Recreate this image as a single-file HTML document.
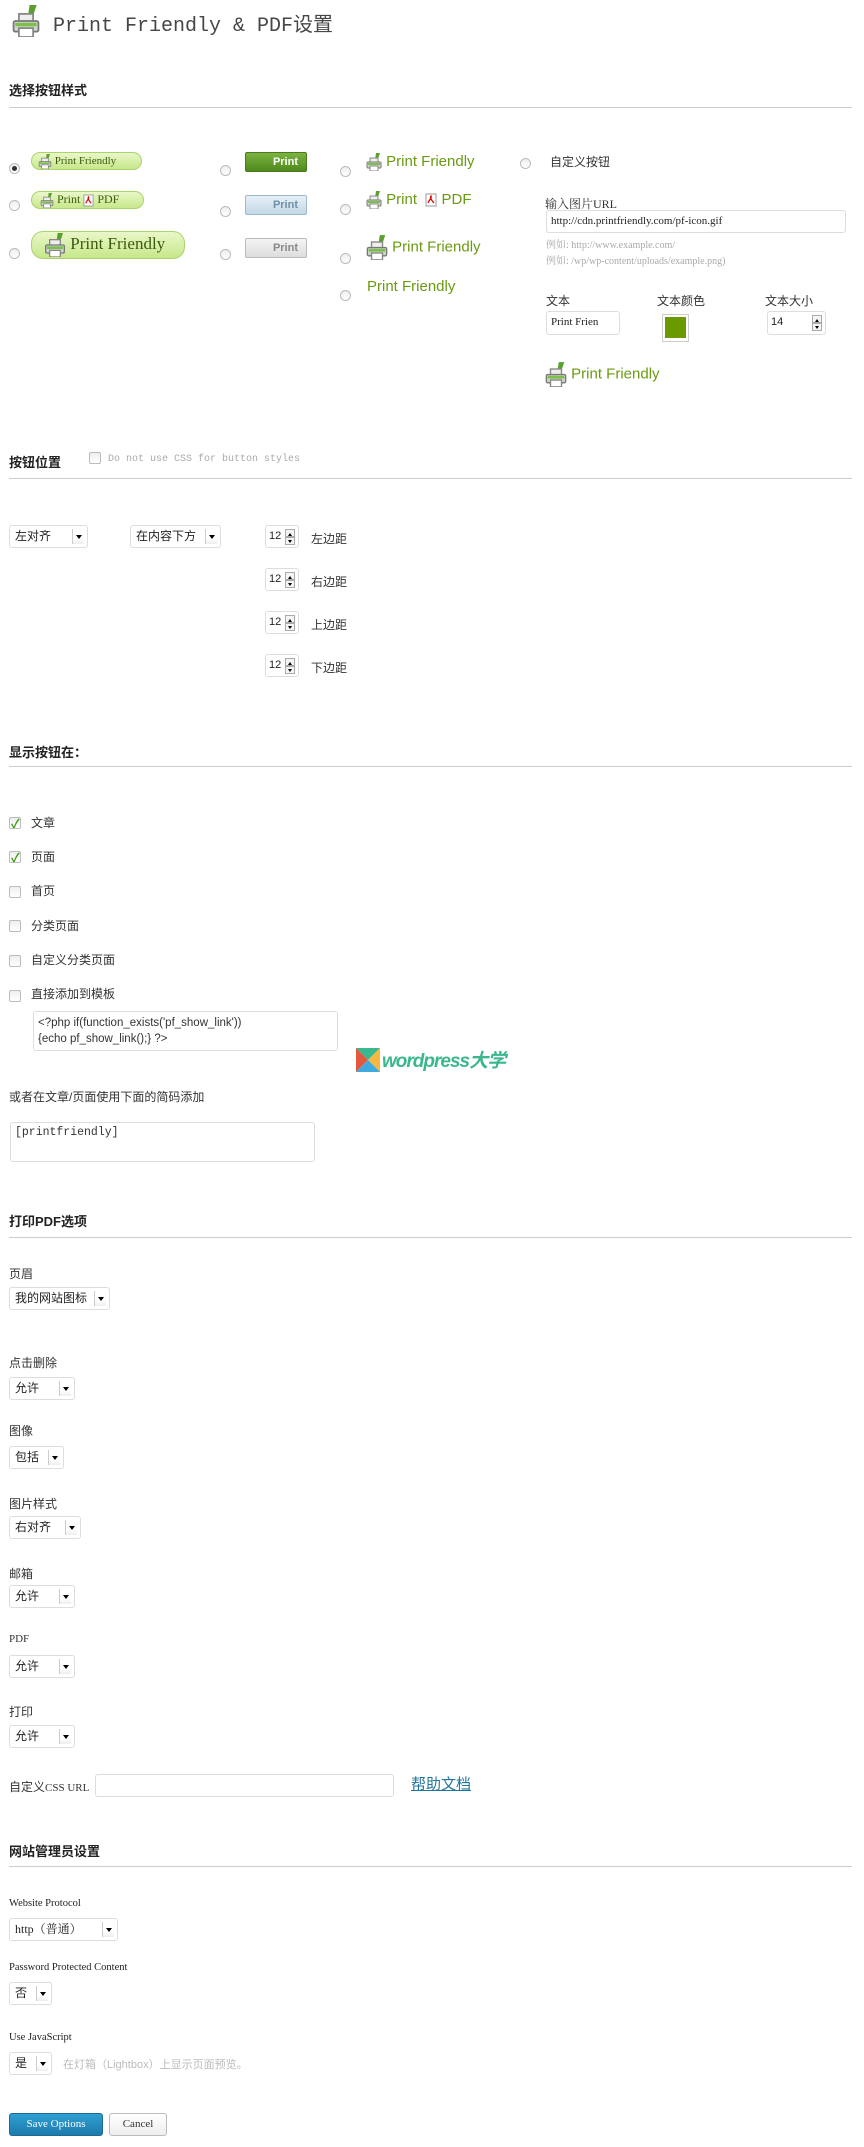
<!DOCTYPE html>
<html><head><meta charset="utf-8">
<style>
*{margin:0;padding:0;box-sizing:border-box}
body{width:864px;height:2147px;position:relative;background:#fff;font-family:"Liberation Sans","Noto Sans CJK SC",sans-serif;font-size:12px;color:#333;overflow:hidden}
.a{position:absolute;white-space:nowrap}
h2{position:absolute;left:9px;font-size:13px;font-weight:bold;color:#222;font-family:"Liberation Sans","Noto Sans CJK SC",sans-serif}
.hr{position:absolute;left:9px;right:12px;height:1px;background:#ccc}
.radio{position:absolute;width:11px;height:11px;border:1px solid #bbb;border-radius:50%;background:linear-gradient(#eee,#fff)}
.radio.on::after{content:"";position:absolute;left:2px;top:2px;width:5px;height:5px;border-radius:50%;background:#333}
.cb{position:absolute;width:12px;height:12px;border:1px solid #bbb;background:linear-gradient(#eee,#fff);border-radius:2px}
.cb.on::after{content:"✓";position:absolute;left:1px;top:-3px;font-size:12px;color:#3a9a10;font-weight:bold}
.inp{position:absolute;border:1px solid #ddd;border-radius:3px;background:#fff;font-family:"Liberation Serif","Noto Serif CJK SC",serif;font-size:11px;padding:4px 4px;color:#222}
.sel{position:absolute;height:23px;border:1px solid #ddd;border-radius:3px;background:#fff;font-size:12px;line-height:21px;padding:0 5px;color:#222}
.sel i{position:absolute;right:3px;top:3px;width:12px;height:15px;border-left:1px solid #ccc;background:linear-gradient(#fff 60%,#eee)}
.sel i::after{content:"";position:absolute;left:3px;top:6px;border:3px solid transparent;border-top:4px solid #000}
.spin{position:absolute;width:34px;height:23px;border:1px solid #ddd;border-radius:3px;font-size:11px;line-height:21px;padding:0 3px;color:#222}
.spin b,.spin u{position:absolute;right:3px;width:10px;height:8px;border:1px solid #aaa;background:#f4f4f4}
.spin b{top:3px}.spin u{top:11px}
.spin b::after{content:"";position:absolute;left:2px;top:1px;border:2px solid transparent;border-bottom:3px solid #000}
.spin u::after{content:"";position:absolute;left:2px;top:2px;border:2px solid transparent;border-top:3px solid #000}
.lbl{position:absolute;font-size:12px;color:#333}
.pf{color:#6a9a10;font-size:15px}
.pill{position:absolute;border:1px solid #a9d36b;border-radius:12px;background:linear-gradient(#eaf7c9,#c6e88a);color:#3b5a10;font-family:"Liberation Serif",serif}
.pb{position:absolute;width:62px;height:20px;border-radius:2px;font-size:11px;font-weight:bold;text-align:right;padding:3px 8px 0 0;color:#fff}
.mono{font-family:"Liberation Mono","Noto Sans CJK SC",monospace}
svg{vertical-align:middle}
</style></head><body>
<svg width="0" height="0" style="position:absolute"><defs>
<symbol id="pr" viewBox="0 0 16 18"><path d="M10 0 L14 0 L12 6 L9 7 Z" fill="#5aa02c"/><rect x="4" y="5" width="8" height="5" fill="#eee" stroke="#888"/><rect x="1" y="9" width="14" height="6" rx="1" fill="#cfd8cf" stroke="#777"/><rect x="2" y="10" width="12" height="2" fill="#7cc04a"/><rect x="4" y="13" width="8" height="5" fill="#fff" stroke="#888"/></symbol>
<symbol id="pdf" viewBox="0 0 12 14"><rect x="1" y="1" width="10" height="12" fill="#fff" stroke="#999"/><path d="M3 10 C5 6 7 4 6 3 C5 4 6 7 9 10" stroke="#d00" fill="none" stroke-width="1.3"/></symbol>
</defs></svg>

<svg class="a" style="left:11px;top:5px" width="30" height="32" viewBox="0 0 16 18"><use href="#pr"/></svg>
<div class="a mono" style="left:53px;top:8px;font-size:20px;color:#464646">Print Friendly &amp; PDF设置</div>

<h2 style="top:80px">选择按钮样式</h2>
<div class="hr" style="top:107px"></div>

<div class="radio on" style="left:9px;top:163px"></div>
<div class="pill" style="left:31px;top:152px;width:111px;height:18px;font-size:11px;padding:1px 0 0 6px"><svg width="14" height="15"><use href="#pr"/></svg> Print Friendly</div>
<div class="radio" style="left:9px;top:200px"></div>
<div class="pill" style="left:31px;top:191px;width:113px;height:18px;font-size:12px;padding:0 0 0 8px"><svg width="14" height="15"><use href="#pr"/></svg> Print <svg width="11" height="13"><use href="#pdf"/></svg> PDF</div>
<div class="radio" style="left:9px;top:248px"></div>
<div class="pill" style="left:31px;top:231px;width:154px;height:28px;font-size:17px;padding:1px 0 0 12px"><svg width="22" height="24"><use href="#pr"/></svg> Print Friendly</div>

<div class="radio" style="left:220px;top:165px"></div>
<div class="pb" style="left:245px;top:152px;background:linear-gradient(#7cb342,#4e8a1c);border:1px solid #4a7a1c">Print</div>
<div class="radio" style="left:220px;top:206px"></div>
<div class="pb" style="left:245px;top:195px;background:linear-gradient(#e6f0f7,#c4d8e6);border:1px solid #9fb8cc;color:#6e8fa8">Print</div>
<div class="radio" style="left:220px;top:249px"></div>
<div class="pb" style="left:245px;top:238px;background:linear-gradient(#f4f4f4,#ddd);border:1px solid #bbb;color:#888">Print</div>

<div class="radio" style="left:340px;top:166px"></div>
<div class="a pf" style="left:366px;top:153px"><svg width="16" height="18"><use href="#pr"/></svg> Print Friendly</div>
<div class="radio" style="left:340px;top:204px"></div>
<div class="a pf" style="left:366px;top:191px"><svg width="16" height="18"><use href="#pr"/></svg> Print &nbsp;<svg width="12" height="14"><use href="#pdf"/></svg> PDF</div>
<div class="radio" style="left:340px;top:253px"></div>
<div class="a pf" style="left:366px;top:235px"><svg width="22" height="25"><use href="#pr"/></svg> Print Friendly</div>
<div class="radio" style="left:340px;top:290px"></div>
<div class="a pf" style="left:367px;top:278px">Print Friendly</div>

<div class="radio" style="left:520px;top:158px"></div>
<div class="lbl" style="left:550px;top:153px">自定义按钮</div>
<div class="lbl" style="left:545px;top:195px;font-family:'Liberation Serif','Noto Serif CJK SC',serif">输入图片URL</div>
<div class="inp" style="left:546px;top:210px;width:300px;height:23px">http://cdn.printfriendly.com/pf-icon.gif</div>
<div class="a" style="left:546px;top:236px;font-size:10px;color:#aaa;font-family:'Liberation Serif','Noto Serif CJK SC',serif">例如: http://www.example.com/</div>
<div class="a" style="left:546px;top:252px;font-size:10px;color:#aaa;font-family:'Liberation Serif','Noto Serif CJK SC',serif">例如:  /wp/wp-content/uploads/example.png)</div>
<div class="lbl" style="left:546px;top:292px">文本</div>
<div class="lbl" style="left:657px;top:292px">文本颜色</div>
<div class="lbl" style="left:765px;top:292px">文本大小</div>
<div class="inp" style="left:546px;top:311px;width:74px;height:24px">Print Frien</div>
<div class="a" style="left:662px;top:314px;width:27px;height:28px;border:1px solid #ccc;background:#fff;padding:2px"><div style="width:21px;height:21px;background:#6a9a00"></div></div>
<div class="spin" style="left:767px;top:311px;width:59px;height:24px">14<b></b><u></u></div>
<div class="a pf" style="left:545px;top:362px"><svg width="22" height="25"><use href="#pr"/></svg> Print Friendly</div>

<h2 style="top:452px">按钮位置</h2>
<div class="cb" style="left:89px;top:452px"></div>
<div class="a" style="left:108px;top:454px;font-size:10px;color:#aaa;font-family:'Liberation Mono',monospace">Do not use CSS for button styles</div>
<div class="hr" style="top:478px"></div>

<div class="sel" style="left:9px;top:525px;width:79px">左对齐<i></i></div>
<div class="sel" style="left:130px;top:525px;width:91px">在内容下方<i></i></div>
<div class="spin" style="left:265px;top:525px">12<b></b><u></u></div><div class="lbl" style="left:311px;top:530px">左边距</div>
<div class="spin" style="left:265px;top:568px">12<b></b><u></u></div><div class="lbl" style="left:311px;top:573px">右边距</div>
<div class="spin" style="left:265px;top:611px">12<b></b><u></u></div><div class="lbl" style="left:311px;top:616px">上边距</div>
<div class="spin" style="left:265px;top:654px">12<b></b><u></u></div><div class="lbl" style="left:311px;top:659px">下边距</div>

<h2 style="top:742px">显示按钮在：</h2>
<div class="hr" style="top:766px"></div>
<div class="cb on" style="left:9px;top:817px"></div><div class="lbl" style="left:31px;top:814px">文章</div>
<div class="cb on" style="left:9px;top:851px"></div><div class="lbl" style="left:31px;top:848px">页面</div>
<div class="cb" style="left:9px;top:886px"></div><div class="lbl" style="left:31px;top:882px">首页</div>
<div class="cb" style="left:9px;top:920px"></div><div class="lbl" style="left:31px;top:917px">分类页面</div>
<div class="cb" style="left:9px;top:955px"></div><div class="lbl" style="left:31px;top:951px">自定义分类页面</div>
<div class="cb" style="left:9px;top:990px"></div><div class="lbl" style="left:31px;top:985px">直接添加到模板</div>
<div class="a" style="left:33px;top:1011px;width:305px;height:40px;border:1px solid #ddd;border-radius:3px;padding:3px 4px;font-size:11.5px;line-height:16px;white-space:pre;font-family:'Liberation Sans',sans-serif">&lt;?php if(function_exists('pf_show_link'))
{echo pf_show_link();} ?&gt;</div>
<svg class="a" style="left:356px;top:1048px" width="24" height="24" viewBox="0 0 24 24"><polygon points="0,0 24,0 12,12" fill="#3bb78f"/><polygon points="0,0 12,12 0,24" fill="#e2583e"/><polygon points="24,0 24,24 12,12" fill="#f5b942"/><polygon points="0,24 24,24 12,12" fill="#3fa9e0"/></svg>
<div class="a" style="left:382px;top:1046px;font-size:19px;font-weight:bold;font-style:italic;color:#3bb78f;letter-spacing:-1px">wordpress大学</div>
<div class="lbl" style="left:9px;top:1088px">或者在文章/页面使用下面的简码添加</div>
<div class="a" style="left:10px;top:1122px;width:305px;height:40px;border:1px solid #ddd;border-radius:3px;padding:3px 4px;font-size:11.5px;font-family:'Liberation Mono',monospace">[printfriendly]</div>

<h2 style="top:1211px">打印PDF选项</h2>
<div class="hr" style="top:1237px"></div>
<div class="lbl" style="left:9px;top:1265px">页眉</div>
<div class="sel" style="left:9px;top:1287px;width:101px">我的网站图标<i></i></div>
<div class="lbl" style="left:9px;top:1354px">点击删除</div>
<div class="sel" style="left:9px;top:1377px;width:66px">允许<i></i></div>
<div class="lbl" style="left:9px;top:1422px">图像</div>
<div class="sel" style="left:9px;top:1446px;width:55px">包括<i></i></div>
<div class="lbl" style="left:9px;top:1495px">图片样式</div>
<div class="sel" style="left:9px;top:1516px;width:72px">右对齐<i></i></div>
<div class="lbl" style="left:9px;top:1565px">邮箱</div>
<div class="sel" style="left:9px;top:1585px;width:66px">允许<i></i></div>
<div class="lbl" style="left:9px;top:1633px;font-family:'Liberation Serif',serif;font-size:11px">PDF</div>
<div class="sel" style="left:9px;top:1655px;width:66px">允许<i></i></div>
<div class="lbl" style="left:9px;top:1703px">打印</div>
<div class="sel" style="left:9px;top:1725px;width:66px">允许<i></i></div>
<div class="lbl" style="left:9px;top:1778px">自定义<span style="font-family:'Liberation Serif',serif;font-size:11px">CSS URL</span></div>
<div class="a" style="left:95px;top:1774px;width:299px;height:23px;border:1px solid #ddd;border-radius:3px"></div>
<div class="a" style="left:411px;top:1773px;font-size:15px;color:#21759b;text-decoration:underline">帮助文档</div>

<h2 style="top:1841px">网站管理员设置</h2>
<div class="hr" style="top:1866px"></div>
<div class="a" style="left:9px;top:1898px;font-size:10.5px;font-family:'Liberation Serif',serif;color:#222">Website Protocol</div>
<div class="sel" style="left:9px;top:1918px;width:109px;font-family:'Liberation Serif','Noto Serif CJK SC',serif">http（普通）<i></i></div>
<div class="a" style="left:9px;top:1962px;font-size:10.5px;font-family:'Liberation Serif',serif;color:#222">Password Protected Content</div>
<div class="sel" style="left:9px;top:1982px;width:43px">否<i></i></div>
<div class="a" style="left:9px;top:2032px;font-size:10.5px;font-family:'Liberation Serif',serif;color:#222">Use JavaScript</div>
<div class="sel" style="left:9px;top:2052px;width:43px">是<i></i></div>
<div class="a" style="left:63px;top:2056px;font-size:11px;color:#bbb">在灯箱（Lightbox）上显示页面预览。</div>

<div class="a" style="left:9px;top:2113px;width:94px;height:23px;border:1px solid #1e6a92;border-radius:3px;background:linear-gradient(#2e9fd2,#1e7aad);color:#fff;font-size:11px;font-family:'Liberation Serif',serif;text-align:center;line-height:21px">Save Options</div>
<div class="a" style="left:109px;top:2113px;width:58px;height:23px;border:1px solid #bbb;border-radius:3px;background:linear-gradient(#fff,#eee);color:#333;font-size:11px;font-family:'Liberation Serif',serif;text-align:center;line-height:21px">Cancel</div>
</body></html>
